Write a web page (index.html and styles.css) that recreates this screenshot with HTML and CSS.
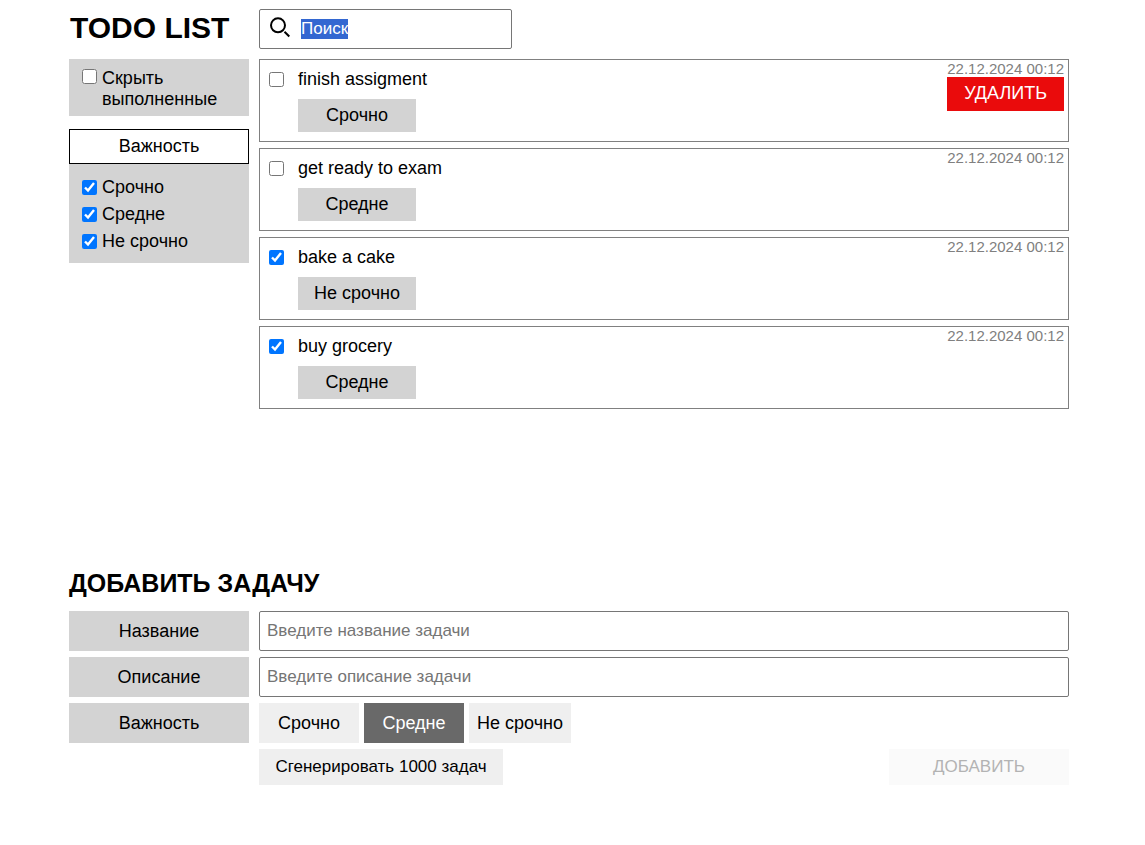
FILE: index.html
```html
<!DOCTYPE html>
<html lang="ru">
<head>
  <meta charset="utf-8">
  <meta name="viewport" content="width=device-width, initial-scale=1">
  <title>TODO LIST</title>
  <link rel="stylesheet" href="styles.css">
</head>
<body>
  <div class="page">
    <header class="columns header">
      <h1 class="title">TODO LIST</h1>
      <label class="search">
        <svg class="search-icon" viewBox="0 0 24 24" aria-hidden="true">
          <circle cx="10" cy="8.300" r="7"/>
          <path d="M16.500 14.700 21.300 19.500"/>
        </svg>
        <input class="search-input" id="search" type="text" aria-label="Поиск" placeholder="Поиск" value="Поиск">
      </label>
    </header>

    <main class="columns board">
      <aside class="filters">
        <label class="filter-hide"><input class="check" type="checkbox"><span>Скрыть выполненные</span></label>
        <fieldset class="filter-group">
          <legend class="filter-title">Важность</legend>
          <div class="filter-options">
            <label class="filter-option"><input class="check" type="checkbox" checked><span>Срочно</span></label>
            <label class="filter-option"><input class="check" type="checkbox" checked><span>Средне</span></label>
            <label class="filter-option"><input class="check" type="checkbox" checked><span>Не срочно</span></label>
          </div>
        </fieldset>
      </aside>

      <ul class="tasks">
        <li class="task">
          <input class="check" type="checkbox" id="task-1">
          <div class="task-body">
            <label class="task-name" for="task-1">finish assigment</label>
            <span class="task-level">Срочно</span>
          </div>
          <div class="task-side">
            <time class="task-date" datetime="2024-12-22T00:12">22.12.2024 00:12</time>
            <button class="task-delete" type="button">УДАЛИТЬ</button>
          </div>
        </li>
        <li class="task">
          <input class="check" type="checkbox" id="task-2">
          <div class="task-body">
            <label class="task-name" for="task-2">get ready to exam</label>
            <span class="task-level">Средне</span>
          </div>
          <div class="task-side">
            <time class="task-date" datetime="2024-12-22T00:12">22.12.2024 00:12</time>
          </div>
        </li>
        <li class="task">
          <input class="check" type="checkbox" id="task-3" checked>
          <div class="task-body">
            <label class="task-name" for="task-3">bake a cake</label>
            <span class="task-level">Не срочно</span>
          </div>
          <div class="task-side">
            <time class="task-date" datetime="2024-12-22T00:12">22.12.2024 00:12</time>
          </div>
        </li>
        <li class="task">
          <input class="check" type="checkbox" id="task-4" checked>
          <div class="task-body">
            <label class="task-name" for="task-4">buy grocery</label>
            <span class="task-level">Средне</span>
          </div>
          <div class="task-side">
            <time class="task-date" datetime="2024-12-22T00:12">22.12.2024 00:12</time>
          </div>
        </li>
      </ul>
    </main>

    <form class="add">
      <h2 class="add-title">ДОБАВИТЬ ЗАДАЧУ</h2>
      <div class="columns">
        <label class="add-label" for="name">Название</label>
        <input class="add-input" id="name" type="text" placeholder="Введите название задачи">
      </div>
      <div class="columns">
        <label class="add-label" for="description">Описание</label>
        <input class="add-input" id="description" type="text" placeholder="Введите описание задачи">
      </div>
      <div class="columns">
        <span class="add-label" id="level-label">Важность</span>
        <div class="levels" role="group" aria-labelledby="level-label">
          <button class="level" type="button" aria-pressed="false">Срочно</button>
          <button class="level level-active" type="button" aria-pressed="true">Средне</button>
          <button class="level" type="button" aria-pressed="false">Не срочно</button>
        </div>
      </div>
      <div class="columns">
        <div class="add-actions">
          <button class="action action-generate" type="button">Сгенерировать 1000 задач</button>
          <button class="action action-add" type="submit" disabled>ДОБАВИТЬ</button>
        </div>
      </div>
    </form>
  </div>
  <script src="script.js"></script>
</body>
</html>
```

FILE: styles.css
```css
* {
  box-sizing: border-box;
}

body {
  margin: 0;
  padding: 9px 7px 20px 0;
  background: #fff;
  color: #000;
  font: 18px/21px "Liberation Sans", Arial, sans-serif;
}

h1,
h2,
ul,
fieldset {
  margin: 0;
  padding: 0;
}

button,
input {
  font-family: inherit;
}

.page {
  max-width: 1000px;
  margin: 0 auto;
}

.columns {
  display: grid;
  grid-template-columns: 180px minmax(0, 1fr);
  gap: 10px;
}

.header {
  margin-bottom: 10px;
}

.title {
  padding-left: 1px;
  font-size: 30px;
  line-height: 38px;
}

.search {
  display: flex;
  align-items: center;
  width: 253px;
  height: 40px;
  border: 1px solid #767676;
  border-radius: 2px;
  padding: 0 8px;
}

.search-icon {
  flex: none;
  width: 24px;
  height: 24px;
  margin-right: 9px;
  fill: none;
  stroke: #000;
  stroke-width: 2;
}

.search-input {
  min-width: 0;
  flex: 1;
  border: 0;
  padding: 0;
  background: none;
  font-size: 17px;
  outline: none;
}

.search-input::selection {
  background: #3367d1;
  color: #fff;
}

.check {
  flex: none;
  width: 15px;
  height: 15px;
  margin: 0;
  accent-color: #0075ff;
}

.board {
  min-height: 500px;
  align-items: start;
}

.filter-hide {
  display: flex;
  gap: 5px;
  padding: 9px 13px 6px;
  margin-bottom: 13px;
  background: #d3d3d3;
}

.filter-hide .check {
  margin-top: 1px;
}

.filter-group {
  border: 0;
  min-width: 0;
}

.filter-title {
  width: 100%;
  padding: 6px 0;
  border: 1px solid #000;
  text-align: center;
}

.filter-options {
  display: grid;
  gap: 6px;
  padding: 13px 13px 11px;
  background: #d3d3d3;
}

.filter-option {
  display: flex;
  align-items: center;
  gap: 5px;
}

.tasks {
  display: grid;
  gap: 6px;
  list-style: none;
}

.task {
  display: flex;
  align-items: flex-start;
  border: 1px solid #808080;
  padding: 0 4px 9px 9px;
}

.task > .check {
  margin: 12px 14px 0 0;
}

.task-body {
  display: flex;
  flex: 1;
  flex-direction: column;
  align-items: flex-start;
  gap: 9px;
  min-width: 0;
  padding-top: 9px;
}

.task-level {
  width: 118px;
  padding: 6px 0;
  background: #d3d3d3;
  text-align: center;
}

.task-side {
  display: flex;
  flex-direction: column;
}

.task-date {
  color: #808080;
  font-size: 15px;
  line-height: 17px;
}

.task-delete {
  height: 34px;
  border: 0;
  padding: 0 0 2px;
  background: #ea0b0c;
  color: #fff;
  font-size: 18px;
}

.add {
  display: grid;
  gap: 6px;
}

.add-title {
  margin: 9px 0 7px;
  font-size: 25px;
  line-height: 30px;
}

.add-label {
  display: flex;
  align-items: center;
  justify-content: center;
  height: 40px;
  background: #d3d3d3;
}

.add-input {
  width: 100%;
  height: 40px;
  border: 1px solid #767676;
  border-radius: 2px;
  padding: 0 7px;
  font-size: 17px;
}

.add-input::placeholder {
  color: #757575;
}

.levels {
  display: flex;
  gap: 5px;
}

.level {
  min-width: 100px;
  height: 40px;
  border: 0;
  padding: 0 8px;
  background: #efefef;
  color: #000;
  font-size: 18px;
}

.level-active {
  background: #696969;
  color: #fff;
}

.add-actions {
  display: flex;
  grid-column: 2;
  justify-content: space-between;
}

.action {
  height: 36px;
  border: 0;
  background: #efefef;
  color: #000;
  font-size: 17px;
}

.action-generate {
  width: 244px;
}

.action-add {
  width: 180px;
}

.action-add:disabled {
  background: #fafafa;
  color: #b3b3b3;
}
```

FILE: script.js
```js
const search = document.getElementById("search");
search.focus();
search.select();
```
